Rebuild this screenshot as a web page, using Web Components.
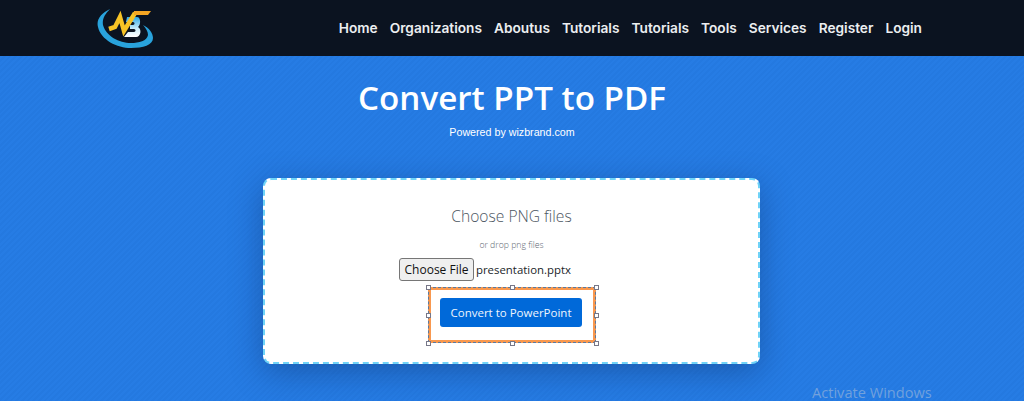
<!DOCTYPE html>
<html lang="en">
<head>
<meta charset="utf-8">
<title>Convert PPT to PDF</title>
<style>
    html, body { margin: 0; height: 401px; overflow: hidden; background: #267ce4; }
</style>
</head>
<body>
<site-page>
    <site-navbar></site-navbar>
    <convert-hero heading="Convert PPT to PDF" note="Powered by wizbrand.com"></convert-hero>
    <upload-card></upload-card>
</site-page>
<activate-mark></activate-mark>

<script>
class SitePage extends HTMLElement {
    constructor() {
        super();
        this.attachShadow({ mode: "open" }).innerHTML = `
<style>
    :host {
        display: flex;
        flex-direction: column;
        height: 401px;
        background: repeating-linear-gradient(135deg, #267ce4 0 2px, #2479e0 2px 4px);
    }
</style>
<slot></slot>`;
    }
}

class SiteNavbar extends HTMLElement {
    links = ["Home", "Organizations", "Aboutus", "Tutorials", "Tutorials", "Tools", "Services", "Register", "Login"];

    constructor() {
        super();
        this.attachShadow({ mode: "open" }).innerHTML = `
<style>
    :host {
        display: flex;
        align-items: center;
        justify-content: space-between;
        height: 56px;
        flex: none;
        padding: 0 102px 0 97px;
        background: #0b1320;
    }
    svg { display: block; margin-top: 4px; }
    nav { display: flex; gap: 12px; margin-top: -1px; }
    a {
        font: 600 13.7px "Inter", "Open Sans", sans-serif;
        color: #eceef0;
        text-decoration: none;
    }
</style>
<svg width="60" height="44" viewBox="0 0 60 44">
    <defs>
        <linearGradient id="b" x1="0" y1="0" x2="0" y2="1">
            <stop offset="0" stop-color="#2fa8e4"/>
            <stop offset=".6" stop-color="#cdeefa"/>
            <stop offset="1" stop-color="#fff"/>
        </linearGradient>
    </defs>
    <path d="M13 1C4 5-1 12 1 19 4 32 20 40 34 40 46 40 56 37 56 30 56 25 52 20 46 17 49 20 51 24 51 27 50 33 42 35 34 35 22 35 9 28 6 17 5 11 8 6 13 1Z" fill="#29a3dc"/>
    <path d="M30 9H40C44 9 44 17 41 19 45 21 44 29 39 29H27L31 24H37C39 24 39 21 37 21H33V17H36C38 17 38 14 36 14H29Z" fill="url(#b)"/>
    <path d="M12 21l6-2 5-10 4 14L38 5" fill="none" stroke="#f7c325" stroke-width="4.5"/>
    <path d="M37 3H54L51 7H37Z" fill="#f5a623"/>
</svg>
<nav></nav>`;
    }

    connectedCallback() {
        const nav = this.shadowRoot.querySelector("nav");
        this.links.forEach((label) => {
            const link = document.createElement("a");
            link.href = "#";
            link.textContent = label;
            nav.appendChild(link);
        });
    }
}

class ConvertHero extends HTMLElement {
    constructor() {
        super();
        this.attachShadow({ mode: "open" }).innerHTML = `
<style>
    :host {
        display: flex;
        flex-direction: column;
        align-items: center;
        flex: none;
        padding-top: 19px;
        color: #fff;
    }
    h1 {
        margin: 0;
        font: 600 33.2px/46px "Open Sans", sans-serif;
    }
    p {
        margin: 4px 0 0;
        font: 400 10.7px/14px "Liberation Sans", sans-serif;
    }
</style>
<h1></h1>
<p></p>`;
    }

    connectedCallback() {
        this.shadowRoot.querySelector("h1").textContent = this.getAttribute("heading");
        this.shadowRoot.querySelector("p").textContent = this.getAttribute("note");
    }
}

class UploadCard extends HTMLElement {
    constructor() {
        super();
        this.attachShadow({ mode: "open" }).innerHTML = `
<style>
    :host {
        display: flex;
        flex-direction: column;
        align-items: center;
        box-sizing: border-box;
        width: 497px;
        height: 186px;
        flex: none;
        margin: 39px 0 0 263px;
        padding-top: 25px;
        background: #fff;
        border: 2px dashed #6fd3f8;
        border-radius: 8px;
        box-shadow: 0 8px 32px rgba(10, 40, 90, .38);
        font-family: "Open Sans", sans-serif;
    }
    h2 {
        margin: 0;
        font: 300 15.6px/22px "Open Sans", sans-serif;
        color: #4c5661;
    }
    small {
        margin-top: 12px;
        font: 300 8.7px/12px "Open Sans", sans-serif;
        color: #5c6670;
    }
    .file {
        display: flex;
        align-items: center;
        gap: 2px;
        align-self: flex-start;
        margin: 7px 0 0 134px;
        font: 400 12px/22px "Open Sans", sans-serif;
        color: #212529;
    }
    .file span { font-size: 11.4px; }
    .pick {
        box-sizing: border-box;
        height: 23px;
        width: 75px;
        padding: 0;
        background: #efefef;
        border: 1px solid #767676;
        border-radius: 3px;
        font: inherit;
        color: #111;
    }
    select-box { margin: 6px 0 0 1px; }
    .go {
        display: block;
        height: 29px;
        width: 142px;
        padding: 0;
        background: #0069d9;
        border: 0;
        border-radius: 3px;
        font: 400 11.5px "Open Sans", sans-serif;
        color: #eef5fd;
    }
</style>
<h2>Choose PNG files</h2>
<small>or drop png files</small>
<div class="file"><button class="pick">Choose File</button><span>presentation.pptx</span></div>
<select-box><button class="go">Convert to PowerPoint</button></select-box>`;
    }
}

class SelectBox extends HTMLElement {
    constructor() {
        super();
        const spots = [[0, 0], [.5, 0], [1, 0], [0, .5], [1, .5], [0, 1], [.5, 1], [1, 1]];
        this.attachShadow({ mode: "open" }).innerHTML = `
<style>
    :host {
        position: relative;
        display: flex;
        justify-content: center;
        align-items: flex-start;
        box-sizing: border-box;
        width: 168px;
        height: 56px;
        padding: 8px 2px 0 0;
        border: 3px solid #f8984f;
        outline: 1px dashed #5a7aa0;
        outline-offset: -1px;
    }
    i {
        position: absolute;
        box-sizing: border-box;
        width: 5px;
        height: 5px;
        background: #fff;
        border: 1px solid #778;
    }
</style>
<slot></slot>
${spots.map(([x, y]) => `<i style="left:calc(${x} * (100% + 6px) - 5.5px);top:calc(${y} * (100% + 6px) - 5.5px)"></i>`).join("")}`;
    }
}

class ActivateMark extends HTMLElement {
    constructor() {
        super();
        this.attachShadow({ mode: "open" }).innerHTML = `
<style>
    :host {
        position: absolute;
        left: 812px;
        top: 383px;
        font: 400 14.6px/18px "Open Sans", sans-serif;
        color: rgba(190, 200, 215, .5);
    }
</style>
Activate Windows`;
    }
}

customElements.define("site-page", SitePage);
customElements.define("site-navbar", SiteNavbar);
customElements.define("convert-hero", ConvertHero);
customElements.define("upload-card", UploadCard);
customElements.define("select-box", SelectBox);
customElements.define("activate-mark", ActivateMark);
</script>
</body>
</html>
